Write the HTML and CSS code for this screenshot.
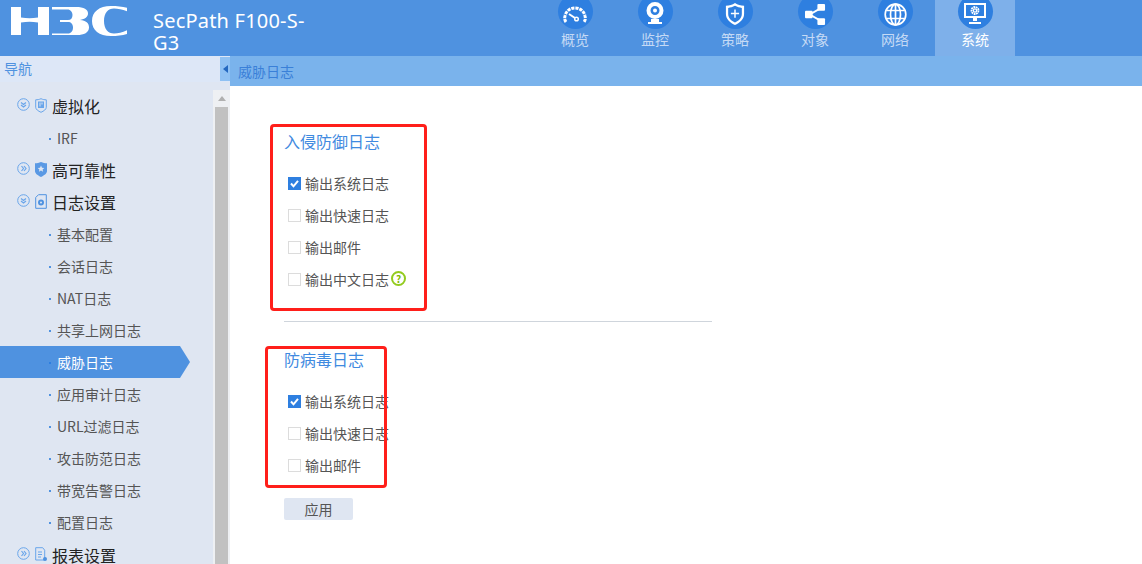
FILE: index.html
```html
<!DOCTYPE html>
<html lang="zh">
<head>
<meta charset="utf-8">
<title>威胁日志</title>
<link rel="stylesheet" href="styles.css">
</head>
<body>
<header class="topbar">
  <div class="logo">
    <svg width="118" height="30" viewBox="0 0 118 30" fill="#fff">
      <path d="M1 1h10v10.500c6 1 11 1 17 0V1h11v28H28V16.500c-6-1-11-1-17 0V29H1z"/>
      <path d="M42 1h24c8 0 12 2.500 12 6.500 0 3.500-3 5.500-8 6.500 6 .7 9 3 9 7.500 0 5-5 7.500-12 7.500H42v-1.500h16c3 0 5-2.500 5-6 0-3.500-2-5.500-5-5.500h-8v-2h8c3 0 4.500-2 4.500-5 0-3-2-5.500-5-5.500H42z"/>
      <path d="M117 1.800v3.500C112 3.500 108 2.500 104 2.500c-6 0-10 4.500-10 12.500s4 12.500 10 12.500c4 0 8-1 13-3.300v3.800c-5 1.500-10 2-16 2-12 0-19-6-19-15S89 0 101 0c6 0 11 .5 16 1.800z"/>
    </svg>
  </div>
  <div class="product">SecPath F100-S-G3</div>
  <nav class="tabs">
    <a class="tab"><span class="tab-ico"><svg width="24" height="17" viewBox="0 0 24 17" fill="none" stroke="#fff"><path d="M3 16C1.500 14 1.500 12 2 10 3 5 7 2 12 2s9 3 10 8c.5 2 .5 4-1 6" stroke-width="3" stroke-dasharray="3.200 .9"/><path d="M6 8l6 4" stroke-width="2"/><circle cx="13.500" cy="13" r="1.800" stroke-width="1.500"/></svg></span><span>概览</span></a>
    <a class="tab"><span class="tab-ico"><svg width="20" height="24" viewBox="0 0 20 24" fill="#fff"><path fill-rule="evenodd" d="M10 0a8.500 8.500 0 1 1 0 17 8.500 8.500 0 0 1 0-17zm0 4a4.500 4.500 0 1 0 0 9 4.500 4.500 0 0 0 0-9z"/><circle cx="10" cy="8.500" r="2"/><path d="M6 17h8v3h3v2H3v-2h3z"/></svg></span><span>监控</span></a>
    <a class="tab"><span class="tab-ico"><svg width="20" height="24" viewBox="0 0 22 26" fill="none" stroke="#fff"><path d="M11 1c3 2 6 3 10 3v9c0 6-5 10-10 12C6 23 1 19 1 13V4c4 0 7-1 10-3z" fill="#fff" stroke="none"/><path d="M11 4c2.500 1.500 5 2 7.500 2.300V13c0 4.500-3.500 7.500-7.500 9.300C7 20.500 3.500 17.500 3.500 13V6.300C6 6 8.500 5.500 11 4z" fill="#2e7fe0" stroke="none"/><path d="M11 8v9M6.500 12.500h9" stroke-width="1.600"/></svg></span><span>策略</span></a>
    <a class="tab"><span class="tab-ico"><svg width="21" height="21" viewBox="0 0 22 22" fill="#fff" stroke="#fff"><path d="M5 11L17 4M5 11l12 7" stroke-width="2"/><rect x="0" y="7" width="8" height="8" rx="1" stroke="none"/><rect x="13" y="0" width="8" height="7" rx="1" stroke="none"/><rect x="13" y="15" width="8" height="7" rx="1" stroke="none"/></svg></span><span>对象</span></a>
    <a class="tab"><span class="tab-ico"><svg width="23" height="23" viewBox="0 0 23 23" fill="none" stroke="#fff" stroke-width="1.700"><circle cx="11.500" cy="11.500" r="10.300"/><ellipse cx="11.500" cy="11.500" rx="5" ry="10.300"/><path d="M11.500 1v21M2.500 7.500h18M2.500 15.500h18"/></svg></span><span>网络</span></a>
    <a class="tab active"><span class="tab-ico"><svg width="24" height="24" viewBox="0 0 24 24" fill="#fff"><path fill-rule="evenodd" d="M1 1h22v15H1zm2 2v11h18V3z"/><rect x="10" y="16" width="4" height="3"/><rect x="6" y="20" width="12" height="2"/><circle cx="12" cy="8.500" r="3.500" fill="none" stroke="#fff" stroke-width="1.800" stroke-dasharray="1.800 .6"/><circle cx="12" cy="8.500" r="2.300"/><circle cx="12" cy="8.500" r="1" fill="#2e7fe0"/></svg></span><span>系统</span></a>
  </nav>
</header>
<div class="body">
  <aside class="side">
    <div class="side-head">
      <span class="side-title">导航</span>
      <span class="collapse"><span class="collapse-arrow"></span></span>
    </div>
    <div class="side-body">
      <ul class="tree">
        <li class="group"><svg class="chev" width="13" height="13" viewBox="0 0 13 13" fill="none" stroke="#69a5ea"><circle cx="6.500" cy="6.500" r="5.800"/><path d="M4 4.500l2.500 2 2.500-2M4 7l2.500 2L9 7" stroke-width="1.200"/></svg><svg class="gico" width="12" height="15" viewBox="0 0 12 15" fill="none" stroke="#69a5ea"><path d="M6 .7c2 .9 3.500 1.100 5.300 1.100v7.500c0 2-2.500 3.800-5.300 5-2.800-1.200-5.300-3-5.300-5V1.800C2.500 1.800 4 1.600 6 .7z"/><rect x="3" y="3.500" width="6" height="6.500" fill="#69a5ea" stroke="none"/><path d="M5 4.500v4M7 4.500v2" stroke="#dfe6f2"/></svg><span>虚拟化</span></li>
        <li class="leaf">IRF</li>
        <li class="group"><svg class="chev" width="13" height="13" viewBox="0 0 13 13" fill="none" stroke="#69a5ea"><circle cx="6.500" cy="6.500" r="5.800"/><path d="M4.500 4l2 2.500-2 2.500M7 4l2 2.500L7 9" stroke-width="1.200"/></svg><svg class="gico" width="12" height="15" viewBox="0 0 12 15" fill="#5a99e4"><path d="M6 0c2 1 4 1.300 6 1.300v8c0 2.200-3 4.300-6 5.700-3-1.400-6-3.500-6-5.700v-8C2 1.300 4 1 6 0z"/><path d="M6 3.500l1 2.200 2.300.2-1.700 1.600.5 2.300L6 8.600l-2.100 1.200.5-2.300-1.700-1.600 2.300-.2z" fill="#dfe6f2"/></svg><span>高可靠性</span></li>
        <li class="group"><svg class="chev" width="13" height="13" viewBox="0 0 13 13" fill="none" stroke="#69a5ea"><circle cx="6.500" cy="6.500" r="5.800"/><path d="M4 4.500l2.500 2 2.500-2M4 7l2.500 2L9 7" stroke-width="1.200"/></svg><svg class="gico" width="12" height="15" viewBox="0 0 12 15" fill="none" stroke="#4f92e0"><path d="M3.500.7h7.800v13.600H.7V3.500z"/><circle cx="6" cy="8.500" r="2" stroke-width="2"/></svg><span>日志设置</span></li>
        <li class="leaf">基本配置</li>
        <li class="leaf">会话日志</li>
        <li class="leaf">NAT日志</li>
        <li class="leaf">共享上网日志</li>
        <li class="leaf current">威胁日志</li>
        <li class="leaf">应用审计日志</li>
        <li class="leaf">URL过滤日志</li>
        <li class="leaf">攻击防范日志</li>
        <li class="leaf">带宽告警日志</li>
        <li class="leaf">配置日志</li>
        <li class="group group-last"><svg class="chev" width="13" height="13" viewBox="0 0 13 13" fill="none" stroke="#69a5ea"><circle cx="6.500" cy="6.500" r="5.800"/><path d="M4.500 4l2 2.500-2 2.500M7 4l2 2.500L7 9" stroke-width="1.200"/></svg><svg class="gico gico-wide" width="13" height="15" viewBox="0 0 13 15" fill="none" stroke="#69a5ea"><path d="M.7.7h7l2 2.500V13H.7z"/><path d="M3 5h4M3 7.500h4M3 10h3"/><circle cx="10" cy="12" r="2" fill="#4f92e0" stroke="none"/></svg><span>报表设置</span></li>
      </ul>
      <div class="scrollbar">
        <div class="scroll-up"></div>
        <div class="scroll-thumb"></div>
      </div>
    </div>
  </aside>
  <main class="main">
    <div class="crumb">威胁日志</div>
    <div class="content">
      <section class="sec">
        <h2 class="sec-title">入侵防御日志</h2>
        <label class="opt"><span class="cb on"><svg width="13" height="13" viewBox="0 0 13 13" fill="none" stroke="#fff" stroke-width="2"><path d="M3 6.500l2.500 2.800L10 3.800"/></svg></span>输出系统日志</label>
        <label class="opt"><span class="cb"></span>输出快速日志</label>
        <label class="opt"><span class="cb"></span>输出邮件</label>
        <label class="opt"><span class="cb"></span>输出中文日志<span class="help">?</span></label>
      </section>
      <hr class="rule">
      <section class="sec">
        <h2 class="sec-title">防病毒日志</h2>
        <label class="opt"><span class="cb on"><svg width="13" height="13" viewBox="0 0 13 13" fill="none" stroke="#fff" stroke-width="2"><path d="M3 6.500l2.500 2.800L10 3.800"/></svg></span>输出系统日志</label>
        <label class="opt"><span class="cb"></span>输出快速日志</label>
        <label class="opt"><span class="cb"></span>输出邮件</label>
      </section>
      <button class="apply">应用</button>
    </div>
    <div class="mark mark-a"></div>
    <div class="mark mark-b"></div>
  </main>
</div>
</body>
</html>
```
FILE: styles.css
```css
* { box-sizing: border-box; }
html, body { margin: 0; height: 100%; overflow: hidden; }
body {
  font-family: "Noto Sans CJK SC", "Noto Sans", sans-serif;
  background: #fff;
  color: #555;
}
.topbar {
  height: 56px;
  background: #4f92e0;
  display: flex;
  overflow: hidden;
}
.logo { width: 153px; padding: 6px 0 0 10px; }
.product {
  width: 170px;
  color: #fff;
  font-family: "Noto Sans", "Noto Sans CJK SC", sans-serif;
  font-size: 20px;
  letter-spacing: .2px;
  line-height: 22px;
  padding-top: 10px;
}
.tabs { display: flex; margin-left: 212px; }
.tab {
  width: 80px;
  height: 56px;
  display: flex;
  flex-direction: column;
  align-items: center;
  color: #c5daf5;
  font-size: 14px;
  line-height: 20px;
}
.tab.active { background: #7eb0ea; color: #fff; }
.tab-ico {
  width: 35px;
  height: 35px;
  margin-top: -6px;
  border-radius: 50%;
  background: #2e7fe0;
  display: flex;
  align-items: center;
  justify-content: center;
  flex: none;
  padding-top: 5px;
}
.body { display: flex; height: 508px; }
.side {
  width: 230px;
  flex: none;
  background: #dfe6f2;
  display: flex;
  flex-direction: column;
}
.side-head {
  height: 26px;
  flex: none;
  display: flex;
  background: #dde7f7;
}
.side-title {
  flex: 1;
  color: #4f92e0;
  font-size: 14px;
  line-height: 24px;
  padding-left: 4px;
}
.collapse {
  width: 10px;
  height: 24px;
  margin-top: 1px;
  flex: none;
  background: #8fc1f3;
  display: flex;
  align-items: center;
  justify-content: center;
}
.collapse-arrow {
  width: 0;
  height: 0;
  border: 4px solid transparent;
  border-right: 5px solid #2468c0;
  border-left: 0;
}
.side-body { flex: 1; display: flex; min-height: 0; overflow: hidden; }
.tree {
  list-style: none;
  margin: 0;
  padding: 9px 0 0;
  width: 213px;
  flex: none;
}
.group {
  height: 32px;
  display: flex;
  align-items: center;
  padding: 0 0 2px 17px;
  color: #222;
  font-size: 16px;
}
.group-last { padding-bottom: 0; }
.chev { margin: -4px 5px 0 0; flex: none; }
.gico { margin: -2px 5px 0 0; flex: none; }
.gico-wide { margin-right: 4px; }
.leaf {
  height: 32px;
  line-height: 31px;
  padding-left: 57px;
  font-size: 14px;
  color: #555;
  position: relative;
}
.leaf::before {
  content: "";
  position: absolute;
  left: 49px;
  top: 15px;
  width: 2px;
  height: 2px;
  background: #4f92e0;
}
.leaf.current {
  top: -1px;
  line-height: 33px;
  width: 190px;
  color: #fff;
  background: #4f92e0;
  clip-path: polygon(0 0, 180px 0, 190px 50%, 180px 100%, 0 100%);
}
.leaf.current::before { background: #2e7fe0; top: 16px; }
.scrollbar {
  width: 17px;
  margin-top: 8px;
  padding: 0 2px;
  background: #eef0f3;
  flex: none;
}
.scroll-up {
  width: 0;
  height: 0;
  margin: 6px auto 6px;
  border: 4px solid transparent;
  border-top: 0;
  border-bottom: 5px solid #b0b0b0;
}
.scroll-thumb { height: 470px; background: #c1c1c1; }
.main { flex: 1; position: relative; min-width: 0; }
.crumb {
  height: 30px;
  background: #7ab3ec;
  color: #3a80d8;
  font-size: 14px;
  line-height: 30px;
  padding-left: 8px;
}
.content { padding: 41px 0 0 54px; }
.sec-title {
  margin: 0 0 12px;
  font-size: 16px;
  font-weight: 400;
  line-height: 28px;
  color: #3f8ae0;
}
.opt {
  display: flex;
  align-items: center;
  height: 32px;
  font-size: 14px;
  color: #555;
}
.cb {
  width: 13px;
  height: 13px;
  margin: 0 4px;
  border: 1px solid #dcdcdc;
  flex: none;
  display: block;
}
.cb.on { background: #2e7fe0; border: 0; }
.cb svg { display: block; }
.help {
  width: 15px;
  height: 15px;
  margin: -2px 0 0 2px;
  border: 2px solid #93cb1f;
  border-radius: 50%;
  color: #7fb800;
  font-size: 10px;
  font-weight: 700;
  line-height: 11px;
  text-align: center;
}
.rule {
  width: 428px;
  height: 1px;
  margin: 26px 0 23px;
  border: 0;
  background: #cfd5dc;
}
.apply {
  display: block;
  width: 69px;
  height: 22px;
  margin-top: 17px;
  padding: 0;
  border: 0;
  border-radius: 2px;
  background: #dfe6f2;
  color: #555;
  font: 14px/22px "Noto Sans CJK SC", sans-serif;
}
.mark {
  position: absolute;
  border: 3px solid #ff1f1a;
  border-radius: 4px;
  pointer-events: none;
}
.mark-a { left: 40px; top: 68px; width: 157px; height: 187px; }
.mark-b { left: 35px; top: 290px; width: 122px; height: 142px; }
```
